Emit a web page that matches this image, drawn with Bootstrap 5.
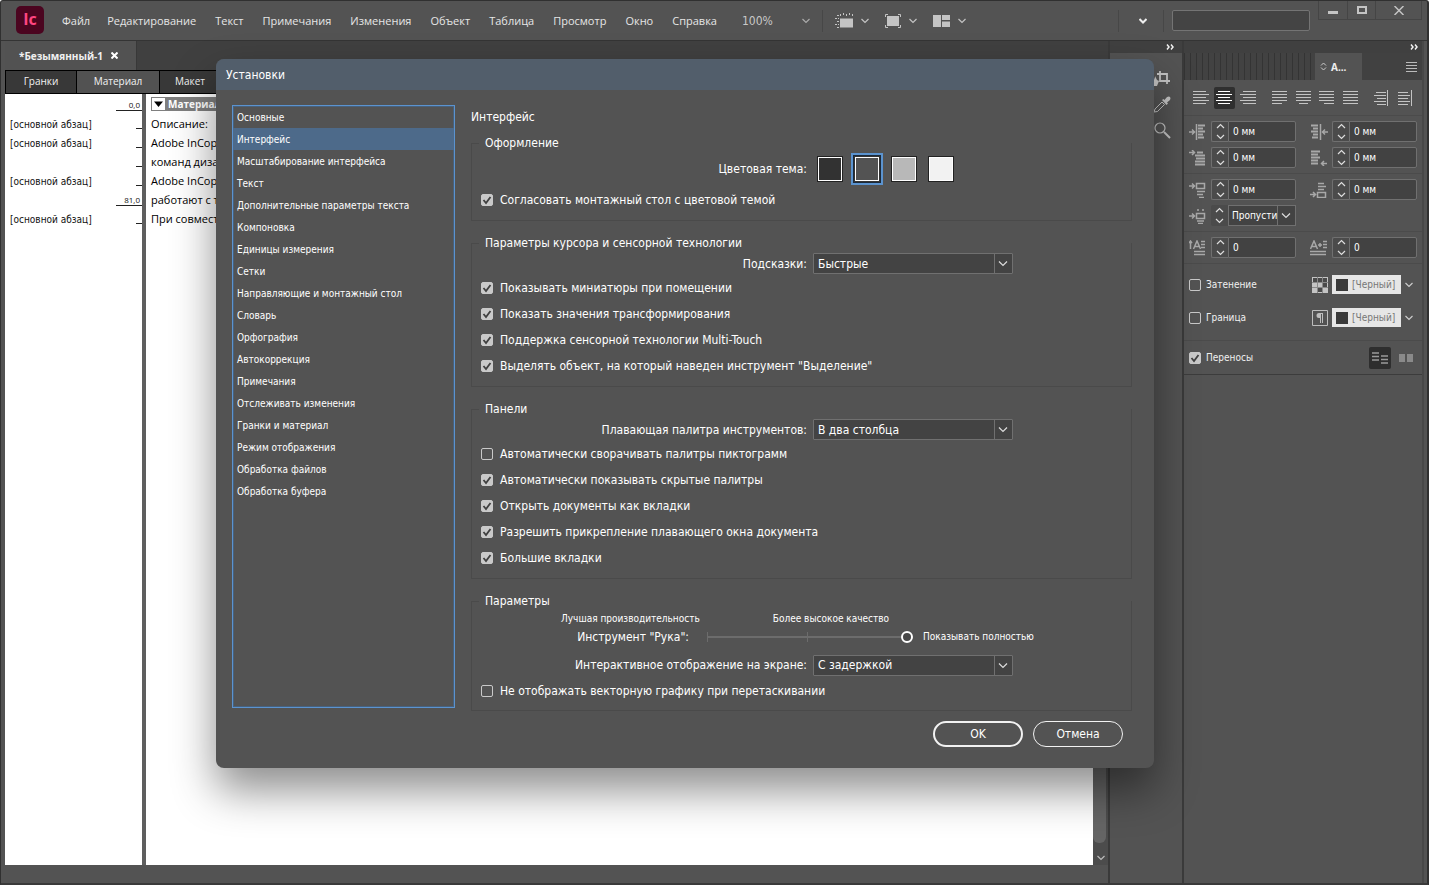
<!DOCTYPE html>
<html lang="ru">
<head>
<meta charset="utf-8">
<meta name="viewport" content="width=device-width, initial-scale=1">
<title>InCopy — Установки</title>
<link href="https://cdn.jsdelivr.net/npm/bootstrap@5.3.0/dist/css/bootstrap.min.css" rel="stylesheet">
<style>
  :root { --bg:#535353; --dark:#424242; --line:#3a3a3a; --edge:#707070; --ink:#f0f0f0; --ico:#c4c4c4; --sel:#5b93cf; }
  body { background:#fff; color:var(--ink); font:12px/18px "DejaVu Sans Condensed","DejaVu Sans",sans-serif; font-stretch:condensed; }
  svg { display:block; flex:none; }
  button { color:inherit; }
  .t10 { font-size:10px; }
  .app { min-height:calc(100vh - 1px); background:var(--bg); border:1px solid #303030; border-bottom:2px solid #3a3a3a; border-right:2px solid #303030; border-radius:3px 3px 0 0; overflow:hidden; padding:0 3px 0 4px; }

  /* menu bar */
  .menubar { height:40px; border-bottom:1px solid #343434; margin:0 -3px 0 -4px; }
  .logo { width:28px; height:28px; margin:0 8px 1px 15px; border-radius:5px; background:#4b0520; color:#ff4582; font:700 16px/26px "Open Sans",sans-serif; text-align:center; }
  .menubar .nav-link { color:#e6e6e6; font:11px/18px "Open Sans",sans-serif; padding:0; margin:0 9px 0 10px; }
  .menubar .nav-link:first-child { margin-right:7px; }
  .plain { background:none; border:0; padding:0; display:flex; align-items:center; color:var(--ico); }
  .zoom { width:60px; color:#c8c8c8; background:transparent; border:0; font-size:12px; padding:0; appearance:none; }
  .vsep { width:1px; height:22px; background:#474747; }
  .search { width:138px; height:21px; background:#444; border:1px solid #747474; border-radius:2px; }
  .winbtns { align-self:flex-start; border:1px solid #454545; border-top:0; height:19px; margin-right:5px; }
  .winbtns button { justify-content:center; height:18px; width:28px; }
  .winbtns button + button { border-left:1px solid #454545; }
  .winbtns button:last-child { width:46px; }

  /* document */
  .strip { background:#404040; }
  .doctab { width:132px; height:29px; background:#525252; font:700 10px/28px "Open Sans",sans-serif; border-right:1px solid #383838; padding-left:14px; }
  .views { height:24px; border:1px solid #000; border-right:0; background:#333; }
  .views .nav-link { color:#f2f2f2; background:#383838; border-right:1px solid #000; border-radius:0; padding:0; text-align:center; font:10px/20px "Open Sans",sans-serif; }
  .views .active { background:#525252; }
  .margin-col { width:137px; background:#fff; color:#111; padding-top:1px; }
  .story { flex:1; background:#fff; color:#000; padding:0 0 0 5px; min-width:0; white-space:nowrap; overflow:hidden; font:11px/19px "Open Sans",sans-serif; }
  .gutter { width:4px; background:#5e5e5e; }
  .prow { height:19px; padding:2px 0 0 5px; font-size:10px; }
  .tick { width:6px; height:1px; background:#222; margin-top:12px; }
  .depth { width:26px; height:12px; border-bottom:1px solid #222; font:8px/12px "Open Sans",sans-serif; text-align:right; padding-right:2px; margin-top:2px; }
  .story-head { height:14px; margin:3px 0 3px 0; background:#7f7f7f; color:#fff; font:700 10px/14px "Open Sans",sans-serif; }
  .twist { width:13px; height:12px; background:#fff; border:0; padding:0; margin:0 3px 0 1px; }
  .scroll-col { width:15px; background:#4c4c4c; }
  .thumb { flex:1; width:13px; background:#656565; border-radius:0 0 6px 6px; }
  .status { height:18px; }

  /* docks */
  .tools { width:74px; border-left:2px solid var(--line); }
  .side { width:242px; border-left:2px solid var(--line); border-right:2px solid #484848; }
  .dockhead { height:12px; background:#404040; }
  .tools .inner { padding:16px 11px 0 0; color:var(--ico); }
  .ribs { flex:1; background:repeating-linear-gradient(90deg,#343434 0 1px,#424242 1px 6px); }
  .ptab { width:47px; height:27px; background:#535353; font:700 10px/26px "Open Sans",sans-serif; color:#eee; padding-left:5px; }
  .pmenu { width:60px; background:#414141; padding-right:5px; }
  .aligns { padding:7px 6px 6px; border-bottom:1px solid #4b4b4b; }
  .aligns button { width:22px; height:22px; border-radius:2px; justify-content:center; margin-right:2px; }
  .aligns .active { background:#2f2f2f; }
  .fields { padding:5px 5px 5px 5px; border-bottom:1px solid #4b4b4b; display:grid; grid-template-columns:minmax(0,1fr) minmax(0,1fr); column-gap:14px; row-gap:5px; }
  .cell { display:flex; align-items:center; height:21px; color:#a8a8a8; }
  .cell > svg:first-child { margin-right:4px; }
  .spin { width:17px; height:21px; border:1px solid var(--edge); border-right:0; border-radius:2px 0 0 2px; background:#4b4b4b; justify-content:center; color:#ddd; }
  .cell input { flex:1; min-width:0; height:21px; background:var(--dark); border:1px solid var(--edge); border-radius:0 2px 2px 0; color:#fff; font-size:10px; padding:0 4px; }
  .ps { flex:1; min-width:0; height:21px; appearance:none; border:1px solid var(--edge); border-radius:0; color:#fff; font-size:10px; padding:0 18px 0 3px; overflow:hidden; text-overflow:clip; }
  .tone { width:69px; height:19px; background:#e6e6e6; color:#777; font-size:10px; border:0; padding:0 4px; display:flex; align-items:center; gap:4px; white-space:nowrap; }
  .tone i { width:12px; height:12px; background:#3a3a3a; flex:none; }
  .opt { height:33px; padding:0 9px 0 5px; }
  .opt label { margin-left:5px; }
  .hyph { height:35px; border-top:1px solid #4b4b4b; border-bottom:1px solid #3c3c3c; margin-top:6px; }
  .colbtn { width:22px; height:22px; background:#2e2e2e; border-radius:2px; justify-content:center; }

  /* check boxes shared by the dialog and the panel */
  .form-check-input { flex:none; width:12px; height:12px; margin:0; float:none; border:1px solid #c9c9c9; border-radius:2px; background-color:transparent; }
  .form-check-input[type=checkbox] { border-radius:2px; }
  .form-check-input:checked[type=checkbox] { background-color:#c9c9c9; border-color:#c9c9c9; background-size:12px 12px; background-image:url("data:image/svg+xml,%3Csvg xmlns='http://www.w3.org/2000/svg' viewBox='0 0 12 12'%3E%3Cpath d='M2.5 6l2.500 3 4.500-6' fill='none' stroke='%23404040' stroke-width='1.800'/%3E%3C/svg%3E"); }
  .chk { display:flex; align-items:center; height:26px; gap:7px; padding-left:1px; }

  /* dialog */
  .dlg { position:absolute; left:216px; top:59px; width:938px; background:var(--bg); border-radius:8px; box-shadow:0 22px 44px rgba(0,0,0,.45); color:#fff; overflow:hidden; padding-bottom:21px; }
  .dlg-title { height:31px; background:#525e6b; padding:0 10px; font:12px/32px "DejaVu Sans Condensed","DejaVu Sans",sans-serif; font-stretch:condensed; margin:0; }
  .dlg-body { padding:15px 22px 0 16px; }
  .cats { width:223px; min-height:603px; align-self:flex-start; border:1px solid var(--sel); box-shadow:inset 0 0 0 1px #48617c; border-radius:0; }
  .cats .list-group-item { background:none; border:0; color:#fff; font-size:10px; line-height:23px; padding:0 4px; height:22px; }
  .cats .list-group-item.active { background:#4d6a8a; margin:0; }
  .pane-title { font-size:12px; line-height:18px; margin:3px 0 8px; }
  fieldset { margin-bottom:13px; padding:0 8px 7px; border:1px solid #4a4a4a !important; border-top:0 !important; }
  fieldset legend { font-size:12px; line-height:18px; margin:0 -8px; padding:0; display:flex; align-items:center; gap:6px; width:auto; float:none; }
  fieldset legend::before { content:""; width:7px; border-top:1px solid #4a4a4a; }
  fieldset legend::after { content:""; flex:1; border-top:1px solid #4a4a4a; }
  .lab { width:327px; text-align:right; margin-right:6px; }
  .frow { height:23px; display:flex; align-items:center; }
  .dd { width:200px; height:21px; appearance:none; color:#fff; font-size:12px; padding:0 22px 0 4px; border:1px solid var(--edge); border-radius:1px; }
  .dd, .ps { background:url("data:image/svg+xml,%3Csvg xmlns='http://www.w3.org/2000/svg' width='18' height='19'%3E%3Cpath d='M.5 0v19' stroke='%23707070'/%3E%3Cpath d='M5 7.500l4 4 4-4' fill='none' stroke='%23ddd' stroke-width='1.200'/%3E%3C/svg%3E") right center no-repeat #434343; }
  .themes { height:33px; margin-bottom:2px; }
  .swatch { width:26px; height:26px; border:1px solid #222; padding:0; box-shadow:inset 0 0 0 1px #fff; }
  .swatch.on { border-color:#333; outline:2px solid var(--sel); outline-offset:1px; box-shadow:inset 0 0 0 1px #fff,0 0 0 1px #1c2a3a; }
  .s1 { background:#323232; } .s2 { background:#535353; } .s3 { background:#b8b8b8; } .s4 { background:#f2f2f2; }
  .ends { height:18px; padding-left:81px; gap:73px; }
  .quality { appearance:none; width:206px; height:16px; margin:0 10px 0 18px; background:linear-gradient(#6c6c6c,#6c6c6c) left center/194px 2px no-repeat,linear-gradient(#6c6c6c,#6c6c6c) 0 3px/1px 10px no-repeat,linear-gradient(#6c6c6c,#6c6c6c) 100px 3px/1px 10px no-repeat; }
  .quality::-webkit-slider-thumb { appearance:none; width:12px; height:12px; border:2px solid #fff; border-radius:50%; background:#484848; }
  .pill { width:90px; height:26px; border:1px solid #f2f2f2; border-radius:13px; color:#fff; font-size:12px; line-height:18px; padding:0; }
  .pill.main { border-width:2px; }
</style>
</head>
<body>
<svg width="0" height="0" class="position-absolute" aria-hidden="true">
  <defs>
    <symbol id="down" viewBox="0 0 8 6"><path d="M.5 1l3.500 3.500L7.500 1" fill="none" stroke="currentColor" stroke-width="1.200"/></symbol>
    <symbol id="more" viewBox="0 0 8 6"><path d="M1 .5L3 3 1 5.500M5 .5L7 3 5 5.500" fill="none" stroke="currentColor" stroke-width="1.500"/></symbol>
    <symbol id="updown" viewBox="0 0 9 17"><path d="M1 5l3.500-3.500L8 5M1 12l3.500 3.500L8 12" fill="none" stroke="currentColor" stroke-width="1.200"/></symbol>
  </defs>
</svg>

<div class="app d-flex flex-column">
  <header class="menubar d-flex align-items-center">
    <div class="logo">Ic</div>
    <nav class="nav flex-nowrap" aria-label="Меню">
      <a class="nav-link" href="#">Файл</a><a class="nav-link" href="#">Редактирование</a><a class="nav-link" href="#">Текст</a><a class="nav-link" href="#">Примечания</a><a class="nav-link" href="#">Изменения</a><a class="nav-link" href="#">Объект</a><a class="nav-link" href="#">Таблица</a><a class="nav-link" href="#">Просмотр</a><a class="nav-link" href="#">Окно</a><a class="nav-link" href="#">Справка</a>
    </nav>
    <select class="zoom ms-3" aria-label="Масштаб"><option>100%</option></select>
    <svg class="me-2" width="8" height="6" color="#aaa"><use href="#down"/></svg>
    <div class="vsep mx-1"></div>
    <button class="plain ms-2 gap-2" aria-label="Линейки"><svg width="18" height="16" viewBox="0 0 18 16"><path d="M5 5.500h13v9H5z" fill="currentColor"/><path d="M5.500 1v3M8.500 0v3M11.500 1v2M14.500 0v3M17.500 1v2M0 5.500h4M2 8.500h2M0 11.500h4M2 14.500h2M2 2.500h3" stroke="currentColor" stroke-dasharray="2 1"/></svg><svg width="8" height="6"><use href="#down"/></svg></button>
    <button class="plain ms-3 gap-2" aria-label="Режим экрана"><svg width="16" height="14" viewBox="0 0 16 14"><path d="M2 2h12v10H2z" fill="currentColor"/><path d="M.5 3V.5H3M13 .5h2.500V3M15.500 11v2.500H13M3 13.500H.5V11" fill="none" stroke="currentColor"/></svg><svg width="8" height="6"><use href="#down"/></svg></button>
    <button class="plain ms-3 gap-2" aria-label="Расположение окон"><svg width="17" height="12" viewBox="0 0 17 12"><path d="M0 0h8v12H0zM9 0h8v5H9zM9 6.500h8V12H9z" fill="currentColor"/></svg><svg width="8" height="6"><use href="#down"/></svg></button>
    <div class="vsep ms-auto"></div>
    <button class="plain mx-3 ps-1" aria-label="Рабочая среда"><svg width="8" height="6" viewBox="0 0 8 6"><path d="M.5 1L4 4.500 7.500 1" fill="none" stroke="#eee" stroke-width="2"/></svg></button>
    <div class="vsep me-2"></div>
    <input class="search me-2" type="search" aria-label="Поиск">
    <div class="winbtns d-flex">
      <button class="plain" aria-label="Свернуть"><svg width="10" height="10" viewBox="0 0 10 10"><path d="M0 6h10v3H0z" fill="currentColor"/></svg></button>
      <button class="plain" aria-label="Развернуть"><svg width="10" height="10" viewBox="0 0 10 10"><path d="M1 2h8v6H1z" fill="none" stroke="currentColor" stroke-width="2"/></svg></button>
      <button class="plain" aria-label="Закрыть"><svg width="10" height="9" viewBox="0 0 10 9"><path d="M.5 0l9 9M9.500 0l-9 9" stroke="currentColor" stroke-width="1.500"/></svg></button>
    </div>
  </header>

  <div class="d-flex flex-fill">
    <main class="d-flex flex-column flex-fill overflow-hidden">
      <div class="strip"><div class="doctab d-flex align-items-center">*Безымянный-1<button class="plain ms-2" aria-label="Закрыть вкладку"><svg width="7" height="7" viewBox="0 0 7 7"><path d="M.5.5l6 6M6.500.5l-6 6" stroke="#fff" stroke-width="2"/></svg></button></div></div>
      <nav class="views nav flex-nowrap" aria-label="Режим просмотра">
        <a class="nav-link" style="width:71px" href="#">Гранки</a><a class="nav-link active" style="width:83px" href="#">Материал</a><a class="nav-link" style="width:61px" href="#">Макет</a>
      </nav>
      <div class="d-flex flex-fill">
        <div class="margin-col">
          <div class="prow d-flex justify-content-end"><span class="depth">0,0</span></div>
          <div class="prow d-flex justify-content-between">[основной абзац]<span class="tick"></span></div>
          <div class="prow d-flex justify-content-between">[основной абзац]<span class="tick"></span></div>
          <div class="prow d-flex justify-content-end"><span class="tick"></span></div>
          <div class="prow d-flex justify-content-between">[основной абзац]<span class="tick"></span></div>
          <div class="prow d-flex justify-content-end"><span class="depth">81,0</span></div>
          <div class="prow d-flex justify-content-between">[основной абзац]<span class="tick"></span></div>
        </div>
        <div class="gutter"></div>
        <div class="story">
          <div class="story-head d-flex align-items-center"><button class="twist" aria-label="Свернуть материал"><svg width="13" height="12" viewBox="0 0 13 12"><path d="M2 3.500h9L6.500 9z" fill="#000"/></svg></button>Материал</div>
          <div>Описание:</div>
          <div>Adobe InCopy</div>
          <div>команд дизайн</div>
          <div>Adobe InCopy</div>
          <div>работают с те</div>
          <div>При совместн</div>
        </div>
        <div class="scroll-col d-flex flex-column align-items-start">
          <div class="thumb"></div>
          <svg class="mt-2 pt-1 mb-1 ms-1" width="8" height="10" color="#bbb"><use href="#down" width="8" height="6"/></svg>
        </div>
      </div>
      <div class="status"></div>
    </main>

    <aside class="tools">
      <div class="dockhead d-flex align-items-center justify-content-end pe-2"><svg width="8" height="6"><use href="#more"/></svg></div>
      <div class="inner d-flex flex-column align-items-end gap-2">
        <svg width="18" height="18" viewBox="0 0 18 18"><path d="M7 2v10h10M4 5h10v10" fill="none" stroke="currentColor" stroke-width="1.800"/><path d="M0 9l1-1 1 3V7l2 4 2 1-2 5H1z" fill="currentColor"/></svg>
        <svg width="18" height="18" viewBox="0 0 18 18"><path d="M1 17l1-3 7-7 2.500 2.500-7 7z" fill="none" stroke="currentColor"/><path d="M9 5l1.500-1 1 1 2.500-3q2-1 3 0t0 3l-3 2.500 1 1L13.500 10z" fill="currentColor"/></svg>
        <svg width="18" height="18" viewBox="0 0 18 18"><circle cx="7" cy="7" r="5" fill="none" stroke="currentColor" stroke-width="1.200"/><path d="M11 11l6 6" stroke="currentColor" stroke-width="2"/></svg>
      </div>
    </aside>

    <aside class="side">
      <div class="dockhead d-flex align-items-center justify-content-end pe-1"><svg width="8" height="6"><use href="#more"/></svg></div>
      <div class="d-flex">
        <div class="ribs"></div>
        <div class="ptab d-flex align-items-center gap-1"><svg width="7" height="9" viewBox="0 0 7 9"><path d="M1 3.500L3.500 1 6 3.500M1 5.500L3.500 8 6 5.500" fill="none" stroke="#ccc"/></svg>А...</div>
        <div class="pmenu d-flex align-items-center justify-content-end"><svg width="11" height="10" viewBox="0 0 11 10"><path d="M0 .5h11M0 3.500h11M0 6.500h11M0 9.500h11" stroke="#bbb"/></svg></div>
      </div>
      <div class="aligns d-flex">
        <button class="plain" aria-label="По левому краю"><svg width="16" height="14" viewBox="0 0 16 14"><path d="M0 .5h13M0 3.500h16M0 6.500h13M0 9.500h16M0 12.500h13" stroke="currentColor"/></svg></button>
        <button class="plain active" aria-label="По центру"><svg width="16" height="14" viewBox="0 0 16 14"><path d="M2 .5h12M0 3.500h16M2 6.500h12M0 9.500h16M2 12.500h12" stroke="#fff"/></svg></button>
        <button class="plain" aria-label="По правому краю"><svg width="16" height="14" viewBox="0 0 16 14"><path d="M3 .5h13M0 3.500h16M3 6.500h13M0 9.500h16M3 12.500h13" stroke="currentColor"/></svg></button>
        <button class="plain ms-2" aria-label="По ширине, влево"><svg width="15" height="14" viewBox="0 0 15 14"><path d="M0 .5h15M0 3.500h15M0 6.500h15M0 9.500h15M0 12.500h10" stroke="currentColor"/></svg></button>
        <button class="plain" aria-label="По ширине, центр"><svg width="15" height="14" viewBox="0 0 15 14"><path d="M0 .5h15M0 3.500h15M0 6.500h15M0 9.500h15M3 12.500h9" stroke="currentColor"/></svg></button>
        <button class="plain" aria-label="По ширине, вправо"><svg width="15" height="14" viewBox="0 0 15 14"><path d="M0 .5h15M0 3.500h15M0 6.500h15M0 9.500h15M5 12.500h10" stroke="currentColor"/></svg></button>
        <button class="plain" aria-label="По ширине"><svg width="15" height="14" viewBox="0 0 15 14"><path d="M0 .5h15M0 3.500h15M0 6.500h15M0 9.500h15M0 12.500h15" stroke="currentColor"/></svg></button>
        <button class="plain ms-2" aria-label="К корешку"><svg width="15" height="16" viewBox="0 0 15 16"><path d="M2 2.500h10M0 5.500h12M3 8.500h9M0 11.500h12M3 14.500h9M13.500 0v16" stroke="currentColor"/></svg></button>
        <button class="plain me-0" aria-label="От корешка"><svg width="15" height="16" viewBox="0 0 15 16"><path d="M0 2.500h10M0 5.500h12M0 8.500h10M0 11.500h12M0 14.500h10M13.500 0v16" stroke="currentColor"/></svg></button>
      </div>
      <div class="fields">
        <div class="cell"><svg width="18" height="16" viewBox="0 0 18 16"><path d="M0 8h5M3 5.500L5.500 8 3 10.500M7.500 0v16" fill="none" stroke="currentColor" stroke-width="1.500"/><path d="M9 1.500h7M9 4.500h5M9 7.500h7M9 10.500h5M9 13.500h6" stroke="currentColor" stroke-width="2"/></svg><button class="plain spin" aria-label="Шаг отступа слева"><svg width="9" height="17"><use href="#updown"/></svg></button><input value="0 мм" aria-label="Отступ слева"></div>
        <div class="cell"><svg width="18" height="16" viewBox="0 0 18 16"><path d="M18 8h-5M15 5.500L12.500 8l2.500 2.500M10.500 0v16" fill="none" stroke="currentColor" stroke-width="1.500"/><path d="M1 1.500h7M3 4.500h5M1 7.500h7M3 10.500h5M2 13.500h6" stroke="currentColor" stroke-width="2"/></svg><button class="plain spin" aria-label="Шаг отступа справа"><svg width="9" height="17"><use href="#updown"/></svg></button><input value="0 мм" aria-label="Отступ справа"></div>
        <div class="cell"><svg width="18" height="16" viewBox="0 0 18 16"><path d="M0 2.500h5M3 0l2.500 2.500L3 5" fill="none" stroke="currentColor" stroke-width="1.500"/><path d="M8 2.500h6M6 5.500h10M7 8.500h9M6 11.500h10M6 14.500h10" stroke="currentColor" stroke-width="2"/></svg><button class="plain spin" aria-label="Шаг первой строки"><svg width="9" height="17"><use href="#updown"/></svg></button><input value="0 мм" aria-label="Отступ первой строки"></div>
        <div class="cell"><svg width="18" height="16" viewBox="0 0 18 16"><path d="M17 13.500h-5M14 11l-2.500 2.500L14 16" fill="none" stroke="currentColor" stroke-width="1.500"/><path d="M1 1.500h9M1 4.500h7M1 7.500h9M1 10.500h7M1 13.500h7" stroke="currentColor" stroke-width="2"/></svg><button class="plain spin" aria-label="Шаг последней строки"><svg width="9" height="17"><use href="#updown"/></svg></button><input value="0 мм" aria-label="Отступ последней строки"></div>
      </div>
      <div class="fields">
        <div class="cell"><svg width="18" height="16" viewBox="0 0 18 16"><path d="M0 4h5M3 1.500L5.500 4 3 6.500M7.500 1.500h8v5h-8z" fill="none" stroke="currentColor" stroke-width="1.500"/><path d="M8 9.500h8M8 12.500h6M10 15.500h5" stroke="currentColor" stroke-width="1.500"/></svg><button class="plain spin" aria-label="Шаг интервала до"><svg width="9" height="17"><use href="#updown"/></svg></button><input value="0 мм" aria-label="Интервал до"></div>
        <div class="cell"><svg width="18" height="16" viewBox="0 0 18 16"><path d="M0 12.500h5M3 10l2.500 2.500L3 15M7.500 10.500h8v5h-8z" fill="none" stroke="currentColor" stroke-width="1.500"/><path d="M8 1.500h6M8 4.500h8M8 7.500h6" stroke="currentColor" stroke-width="1.500"/></svg><button class="plain spin" aria-label="Шаг интервала после"><svg width="9" height="17"><use href="#updown"/></svg></button><input value="0 мм" aria-label="Интервал после"></div>
        <div class="cell"><svg width="18" height="16" viewBox="0 0 18 16"><path d="M0 8h5M3 5.500L5.500 8 3 10.500M7.500 5.500h8v5h-8z" fill="none" stroke="currentColor" stroke-width="1.500"/><path d="M9 1v2M14 1v2M8 13h7M9 15.500h5" stroke="currentColor" stroke-width="1.500"/></svg><button class="plain spin border-0" aria-label="Шаг интервала"><svg width="9" height="17"><use href="#updown"/></svg></button><select class="ps" aria-label="Интервал между абзацами"><option>Пропустить</option></select></div>
      </div>
      <div class="fields">
        <div class="cell"><svg width="18" height="16" viewBox="0 0 18 16"><path d="M1.500 1v8M0 3l1.500-2L3 3M4.500 9L8 1l3.500 8M5.500 6.500h5M12 1.500h4M12 4.500h4M12 7.500h4M5 11.500h11M5 14.500h11" fill="none" stroke="currentColor" stroke-width="1.500"/></svg><button class="plain spin" aria-label="Шаг буквицы"><svg width="9" height="17"><use href="#updown"/></svg></button><input value="0" aria-label="Высота буквицы"></div>
        <div class="cell"><svg width="18" height="16" viewBox="0 0 18 16"><path d="M.5 9L4 1l3.500 8M1.500 6.500h5M8 5h4M10 3v4M13 1.500h4M13 4.500h4M13 7.500h4M0 11.500h16M0 14.500h16" fill="none" stroke="currentColor" stroke-width="1.500"/></svg><button class="plain spin" aria-label="Шаг числа символов"><svg width="9" height="17"><use href="#updown"/></svg></button><input value="0" aria-label="Символов буквицы"></div>
      </div>
      <div class="pt-1">
        <div class="opt d-flex align-items-center"><input class="form-check-input" type="checkbox" id="p1"><label class="t10" for="p1">Затенение</label>
          <svg class="ms-auto me-1" width="16" height="16" viewBox="0 0 16 16"><path d="M0 0h16v16H0z" fill="#c4c4c4"/><path d="M1 1h4v4H1zM6 1h4v4H6zM11 6h4v4h-4zM6 11h4v4H6zM11 1h4v4h-4z" fill="#4a4a4a"/><path d="M5.500 0v16M10.500 0v16M0 5.500h16M0 10.500h16" stroke="#8a8a8a"/></svg>
          <button class="tone"><i></i>[Черный]</button><svg class="ms-1" width="8" height="6" color="#ccc"><use href="#down"/></svg></div>
        <div class="opt d-flex align-items-center"><input class="form-check-input" type="checkbox" id="p2"><label class="t10" for="p2">Граница</label>
          <svg class="ms-auto me-1" width="16" height="16" viewBox="0 0 16 16"><path d="M.5.5h15v15H.5z" fill="none" stroke="#bdbdbd"/><path d="M11 3H7a2.500 2.500 0 000 5h1v5h1V4h1v9h1z" fill="#bdbdbd"/></svg>
          <button class="tone"><i></i>[Черный]</button><svg class="ms-1" width="8" height="6" color="#ccc"><use href="#down"/></svg></div>
      </div>
      <div class="opt hyph d-flex align-items-center"><input class="form-check-input" type="checkbox" id="p3" checked><label class="t10" for="p3">Переносы</label>
        <button class="plain colbtn ms-auto" aria-label="Одна колонка"><svg width="16" height="12" viewBox="0 0 16 12"><path d="M0 1h7M0 4.500h7M0 8h7M9 4h7M9 7.500h7M9 11h7" stroke="#9a9a9a" stroke-width="1.500"/></svg></button>
        <button class="plain ms-2" aria-label="Две колонки"><svg width="14" height="8" viewBox="0 0 14 8"><path d="M0 0h6v8H0zM8 0h6v8H8z" fill="#8a8a8a"/></svg></button></div>
    </aside>
  </div>
</div>

<section class="dlg" role="dialog" aria-labelledby="dt">
  <h1 class="dlg-title" id="dt">Установки</h1>
  <div class="dlg-body d-flex">
    <div class="cats list-group flex-shrink-0 me-3">
      <a class="list-group-item" href="#">Основные</a><a class="list-group-item active" href="#">Интерфейс</a><a class="list-group-item" href="#">Масштабирование интерфейса</a><a class="list-group-item" href="#">Текст</a><a class="list-group-item" href="#">Дополнительные параметры текста</a><a class="list-group-item" href="#">Компоновка</a><a class="list-group-item" href="#">Единицы измерения</a><a class="list-group-item" href="#">Сетки</a><a class="list-group-item" href="#">Направляющие и монтажный стол</a><a class="list-group-item" href="#">Словарь</a><a class="list-group-item" href="#">Орфография</a><a class="list-group-item" href="#">Автокоррекция</a><a class="list-group-item" href="#">Примечания</a><a class="list-group-item" href="#">Отслеживать изменения</a><a class="list-group-item" href="#">Гранки и материал</a><a class="list-group-item" href="#">Режим отображения</a><a class="list-group-item" href="#">Обработка файлов</a><a class="list-group-item" href="#">Обработка буфера</a>
    </div>
    <form class="flex-fill">
      <h2 class="pane-title">Интерфейс</h2>
      <fieldset>
        <legend>Оформление</legend>
        <div class="themes d-flex align-items-center"><span class="lab">Цветовая тема:</span>
          <div class="d-flex ps-1" style="gap:11px"><button type="button" class="swatch s1" aria-label="Темная"></button><button type="button" class="swatch s2 on" aria-label="Умеренно темная"></button><button type="button" class="swatch s3" aria-label="Умеренно светлая"></button><button type="button" class="swatch s4" aria-label="Светлая"></button></div></div>
        <div class="chk"><input class="form-check-input" type="checkbox" id="c1" checked><label for="c1">Согласовать монтажный стол с цветовой темой</label></div>
      </fieldset>
      <fieldset>
        <legend>Параметры курсора и сенсорной технологии</legend>
        <div class="frow"><label class="lab" for="s1">Подсказки:</label><select class="dd" id="s1"><option>Быстрые</option></select></div>
        <div class="chk"><input class="form-check-input" type="checkbox" id="c2" checked><label for="c2">Показывать миниатюры при помещении</label></div>
        <div class="chk"><input class="form-check-input" type="checkbox" id="c3" checked><label for="c3">Показать значения трансформирования</label></div>
        <div class="chk"><input class="form-check-input" type="checkbox" id="c4" checked><label for="c4">Поддержка сенсорной технологии Multi-Touch</label></div>
        <div class="chk"><input class="form-check-input" type="checkbox" id="c5" checked><label for="c5">Выделять объект, на который наведен инструмент "Выделение"</label></div>
      </fieldset>
      <fieldset>
        <legend>Панели</legend>
        <div class="frow"><label class="lab" for="s2">Плавающая палитра инструментов:</label><select class="dd" id="s2"><option>В два столбца</option></select></div>
        <div class="chk"><input class="form-check-input" type="checkbox" id="c6"><label for="c6">Автоматически сворачивать палитры пиктограмм</label></div>
        <div class="chk"><input class="form-check-input" type="checkbox" id="c7" checked><label for="c7">Автоматически показывать скрытые палитры</label></div>
        <div class="chk"><input class="form-check-input" type="checkbox" id="c8" checked><label for="c8">Открыть документы как вкладки</label></div>
        <div class="chk"><input class="form-check-input" type="checkbox" id="c9" checked><label for="c9">Разрешить прикрепление плавающего окна документа</label></div>
        <div class="chk"><input class="form-check-input" type="checkbox" id="c10" checked><label for="c10">Большие вкладки</label></div>
      </fieldset>
      <fieldset class="mb-0">
        <legend>Параметры</legend>
        <div class="ends d-flex t10"><span>Лучшая производительность</span><span>Более высокое качество</span></div>
        <div class="d-flex align-items-center" style="height:18px"><label for="hand" style="width:209px;text-align:right">Инструмент "Рука":</label><input class="quality" type="range" id="hand" min="0" max="2" value="2"><span class="t10">Показывать полностью</span></div>
        <div class="frow" style="height:33px;padding-top:5px"><label class="lab" for="s3">Интерактивное отображение на экране:</label><select class="dd" id="s3"><option>С задержкой</option></select></div>
        <div class="chk" style="height:24px"><input class="form-check-input" type="checkbox" id="c11"><label for="c11">Не отображать векторную графику при перетаскивании</label></div>
      </fieldset>
      <div class="d-flex justify-content-end" style="gap:10px;padding:10px 9px 0 0"><button type="button" class="btn pill main">OK</button><button type="button" class="btn pill">Отмена</button></div>
    </form>
  </div>
</section>
<script src="https://cdn.jsdelivr.net/npm/bootstrap@5.3.0/dist/js/bootstrap.bundle.min.js"></script>
</body>
</html>
